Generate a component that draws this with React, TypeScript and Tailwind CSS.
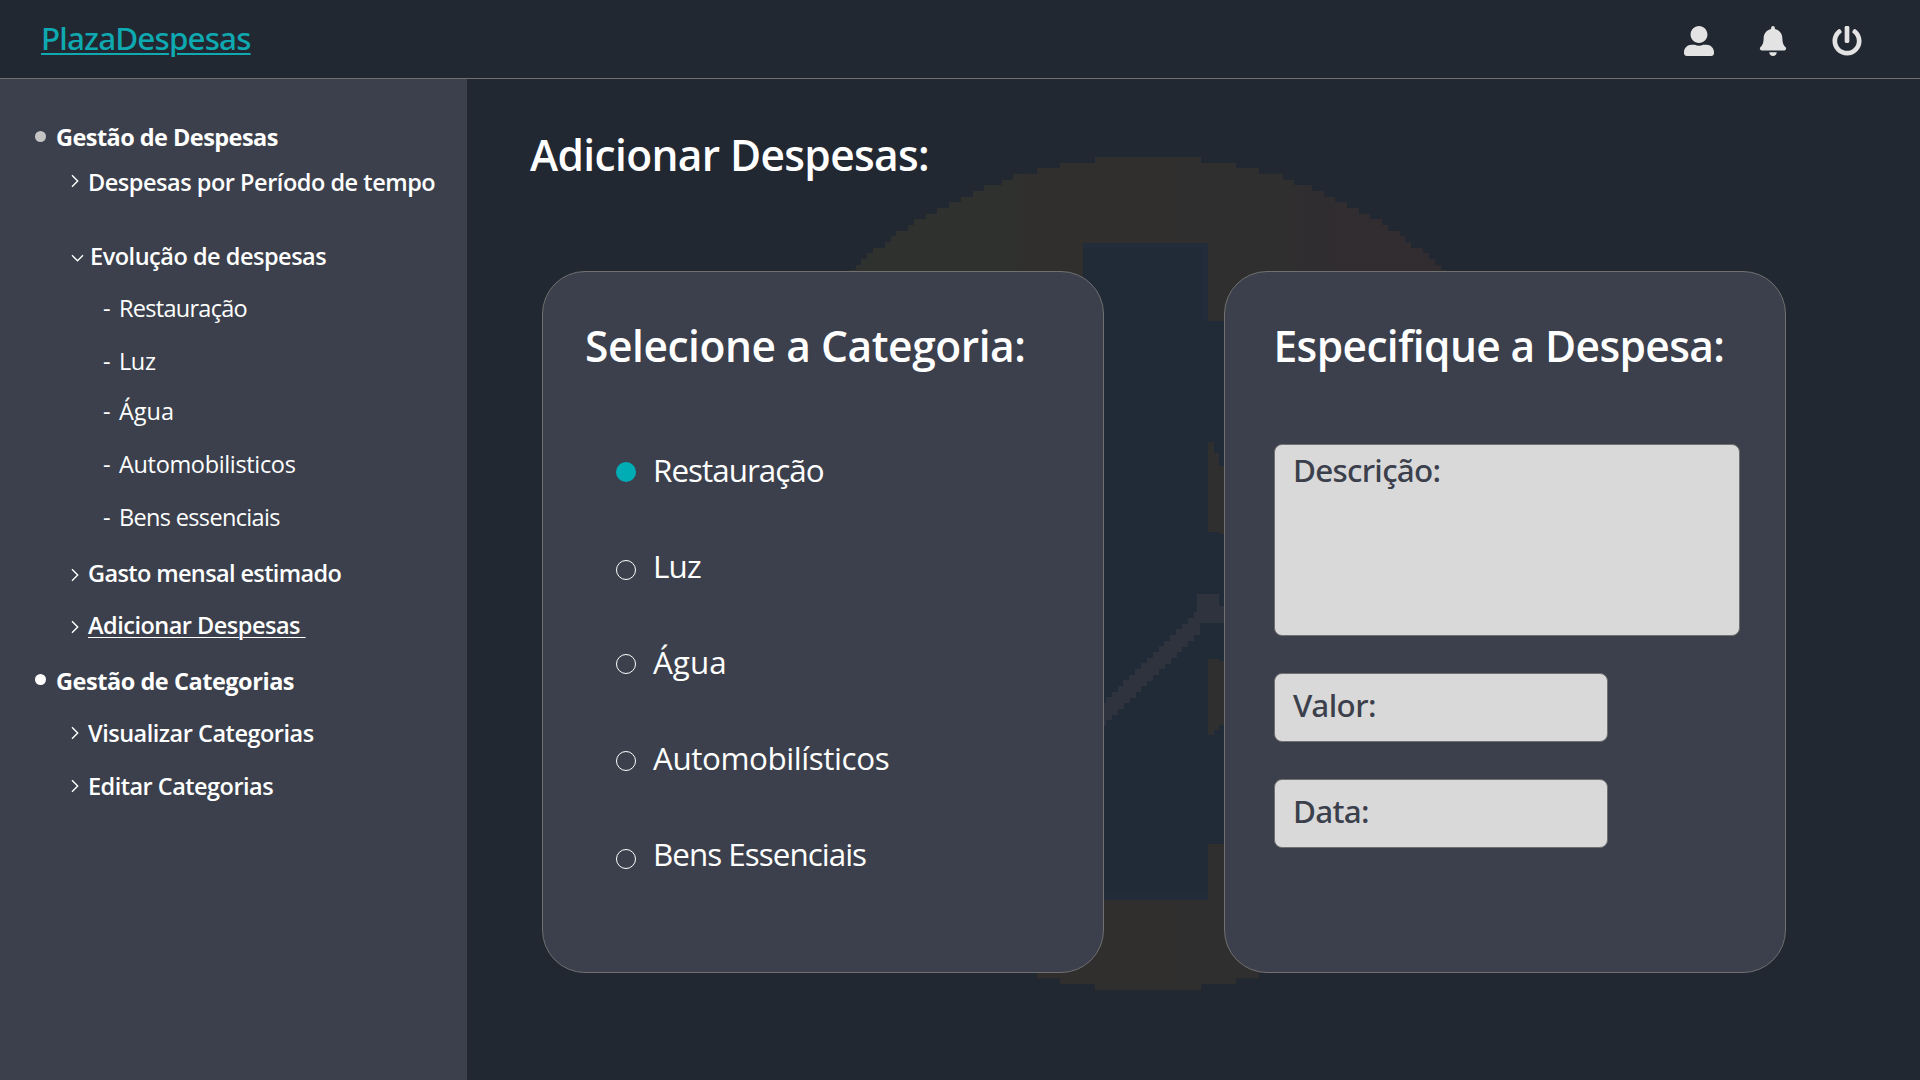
import { FaBell, FaPowerOff, FaUserAlt } from 'react-icons/fa';

const CELL_W = 5.85;
const CELL_H = 5.66;
const CX = 1148;
const CY = 573;
const RX = 432;
const RY = 416;

/** Outline of the coin, stepped on a coarse grid. */
function coinRows() {
  const rows: { x: number; y: number; w: number; h: number }[] = [];
  for (let y = CY - RY; y < CY + RY - 1; y += CELL_H) {
    const dy = (y + CELL_H / 2 - CY) / RY;
    const half = Math.round((RX * Math.sqrt(Math.max(0, 1 - dy * dy))) / CELL_W) * CELL_W;
    rows.push({ x: CX - half, y, w: half * 2, h: CELL_H + 0.5 });
  }
  return rows;
}

/** Rising trend line, one column per cell. */
const trend = Array.from({ length: 17 }, (_, i) => ({
  x: 1100 + i * CELL_W,
  y: 703 - i * 5.66,
}));

function Watermark() {
  return (
    <svg
      className="pointer-events-none absolute inset-0"
      width="1920"
      height="1080"
      viewBox="0 0 1920 1080"
      shapeRendering="crispEdges"
      aria-hidden="true"
    >
      <defs>
        <linearGradient id="coin" gradientUnits="userSpaceOnUse" x1="850" y1="0" x2="1450" y2="0">
          <stop offset="0" stopColor="#2f312e" />
          <stop offset="0.27" stopColor="#2f312e" />
          <stop offset="0.29" stopColor="#302f2e" />
          <stop offset="0.73" stopColor="#302f2f" />
          <stop offset="0.76" stopColor="#302d30" />
          <stop offset="1" stopColor="#312c30" />
        </linearGradient>
      </defs>
      <g fill="url(#coin)">
        {coinRows().map((r) => (
          <rect key={r.y} x={r.x} y={r.y} width={r.w} height={r.h} />
        ))}
      </g>
      <path d="M1083 243H1208V321H1300V844H1208V900H1083Z" fill="#212b37" />
      <path d="M1083 243H1208V248H1083ZM1203 248H1208V321H1203ZM1083 895H1208V900H1083Z" fill="#222c3a" />
      <path d="M1208 442H1214V453H1219V466H1230V534H1219V532H1208Z" fill="#302f2f" />
      <path d="M1208 659H1219V661H1230V725H1219V730H1214V735H1208Z" fill="#302f2f" />
      <g fill="#2f333d">
        {trend.map((t) => (
          <rect key={t.x} x={t.x} y={t.y} width={CELL_W + 0.5} height={23} />
        ))}
        <path d="M1197 594H1219V606H1230V623H1197Z" />
      </g>
    </svg>
  );
}

function Chevron({ down = false, className = '' }: { down?: boolean; className?: string }) {
  return down ? (
    <svg className={`shrink-0 ${className}`} width="13" height="9" viewBox="0 0 13 9" fill="none" stroke="#fff" strokeWidth="1.4">
      <path d="M1 1.3 6.5 6.8 12 1.3" />
    </svg>
  ) : (
    <svg className={`shrink-0 ${className}`} width="9" height="14" viewBox="0 0 9 14" fill="none" stroke="#fff" strokeWidth="1.4">
      <path d="M1 1.3 6.7 7 1 12.7" />
    </svg>
  );
}

type Entry = { kind: 'group' | 'link' | 'open' | 'sub'; label: string; row: string; text: string; mark?: string };

const entries: Entry[] = [
  { kind: 'group', label: 'Gestão de Despesas', row: '', text: 'tracking-[-0.55px]', mark: 'bg-[#c4c4c4] -mt-[2px]' },
  { kind: 'link', label: 'Despesas por Período de tempo', row: 'mt-[13px]', text: 'ml-2 tracking-[-0.47px]', mark: '-mt-[2px]' },
  { kind: 'open', label: 'Evolução de despesas', row: 'mt-[42px]', text: 'ml-[6px] tracking-[-0.48px]', mark: 'mt-[5px]' },
  { kind: 'sub', label: 'Restauração', row: 'mt-5', text: 'ml-px tracking-[-0.72px]' },
  { kind: 'sub', label: 'Luz', row: 'mt-[21px]', text: 'ml-px tracking-[-0.4px]' },
  { kind: 'sub', label: 'Água', row: 'mt-[18px]', text: 'ml-px' },
  { kind: 'sub', label: 'Automobilisticos', row: 'mt-[21px]', text: 'ml-px tracking-[-0.34px]' },
  { kind: 'sub', label: 'Bens essenciais', row: 'mt-[21px]', text: 'ml-px tracking-[-0.66px]' },
  { kind: 'link', label: 'Gasto mensal estimado', row: 'mt-6', text: 'ml-2 tracking-[-0.62px]', mark: 'mt-[3px]' },
  { kind: 'link', label: 'Adicionar Despesas ', row: 'mt-5', text: 'ml-2 tracking-[-0.5px] whitespace-pre underline decoration-1 underline-offset-[3px]', mark: 'mt-[4px]' },
  { kind: 'group', label: 'Gestão de Categorias', row: 'mt-6', text: 'tracking-[-0.46px]', mark: 'bg-white -mt-[3px]' },
  { kind: 'link', label: 'Visualizar Categorias', row: 'mt-5', text: 'ml-2 tracking-[-0.49px]', mark: '' },
  { kind: 'link', label: 'Editar Categorias', row: 'mt-[21px]', text: 'ml-2 tracking-[-0.52px]', mark: '-mt-px' },
];

function SideEntry({ e }: { e: Entry }) {
  if (e.kind === 'group')
    return (
      <li className={`flex h-8 items-center pl-[35px] ${e.row}`}>
        <span className={`size-[11px] shrink-0 rounded-full ${e.mark}`} />
        <span className={`ml-[10px] font-bold ${e.text}`}>{e.label}</span>
      </li>
    );
  if (e.kind === 'sub')
    return (
      <li className={`flex h-8 items-center pl-[103px] ${e.row}`}>
        <span className="w-[15px]">-</span>
        <span className={e.text}>{e.label}</span>
      </li>
    );
  return (
    <li className={`flex h-8 items-center pl-[71px] font-semibold ${e.row}`}>
      <Chevron down={e.kind === 'open'} className={e.mark} />
      <span className={e.text}>{e.label}</span>
    </li>
  );
}

const categories = [
  { label: 'Restauração', dot: 'mt-1', text: 'tracking-[-0.98px]' },
  { label: 'Luz', dot: 'mt-2', text: 'tracking-[-0.8px]' },
  { label: 'Água', dot: 'mt-1', text: '' },
  { label: 'Automobilísticos', dot: 'mt-[6px]', text: 'tracking-[-0.43px]' },
  { label: 'Bens Essenciais', dot: 'mt-[9px]', text: 'tracking-[-0.98px]' },
];

const card = 'h-[702px] w-[562px] rounded-[43px] border border-[#707070] bg-[#3b404c]';
const field = 'rounded-lg border border-[#707070] bg-[#d9d9d9] pl-[18px]';
const cardTitle = 'mt-[46px] text-[42.5px] leading-[56px] font-semibold';

export default function App() {
  return (
    <div className="relative flex h-[1080px] w-[1920px] flex-col overflow-hidden bg-[#222831] font-['Open_Sans',sans-serif] text-white">
      <Watermark />
      <header className="relative flex h-[79px] shrink-0 items-start justify-between border-b border-[#707070] pr-[58px] pl-[41px]">
        <a className="mt-[18px] font-['Noto_Sans',sans-serif] text-[31.4px] leading-10 font-medium tracking-[-0.85px] text-[#0fa9b1] underline decoration-2 underline-offset-[3px]">
          PlazaDespesas
        </a>
        <nav className="mt-[26px] flex items-center text-[30px] text-[#e3e3e3]">
          <FaUserAlt />
          <FaBell className="ml-[44px]" />
          <FaPowerOff className="ml-11" />
        </nav>
      </header>

      <div className="relative flex flex-1">
        <aside className="w-[467px] shrink-0 bg-[#3b404c] pt-[42px]">
          <ul className="text-[23.5px] leading-8 whitespace-nowrap">
            {entries.map((e) => (
              <SideEntry key={e.kind + e.label} e={e} />
            ))}
          </ul>
        </aside>

        <main className="flex-1 pl-[63px]">
          <h1 className="mt-[48px] text-[42.5px] leading-[56px] font-semibold tracking-[-0.64px]">Adicionar Despesas:</h1>

          <div className="mt-[88px] ml-[12px] flex gap-[120px]">
            <section className={card}>
              <h2 className={`ml-[42px] tracking-[-0.44px] ${cardTitle}`}>Selecione a Categoria:</h2>
              <ul className="mt-[72px] ml-[72.5px] flex flex-col gap-12">
                {categories.map((c, i) => (
                  <li key={c.label} className="flex h-12 items-center">
                    <span
                      className={`size-5 shrink-0 rounded-full ${c.dot} ${i === 0 ? 'bg-[#00adb5]' : 'border border-white'}`}
                    />
                    <span className={`ml-[17.5px] text-[31.4px] leading-[48px] ${c.text}`}>{c.label}</span>
                  </li>
                ))}
              </ul>
            </section>

            <section className={card}>
              <h2 className={`ml-[48.5px] tracking-[-0.62px] ${cardTitle}`}>Especifique a Despesa:</h2>
              <div className="mt-[70px] ml-[49px] font-['Noto_Sans',sans-serif] text-[31.4px] leading-[48px] font-medium text-[#3b404c]">
                <div className={`h-[192px] w-[466px] pt-[1px] tracking-[-0.71px] ${field}`}>Descrição:</div>
                <div className={`mt-[37px] h-[69px] w-[334px] pt-[7px] tracking-[-0.5px] ${field}`}>Valor:</div>
                <div className={`mt-[37px] h-[69px] w-[334px] pt-[7px] tracking-[-0.7px] ${field}`}>Data:</div>
              </div>
            </section>
          </div>
        </main>
      </div>
    </div>
  );
}
